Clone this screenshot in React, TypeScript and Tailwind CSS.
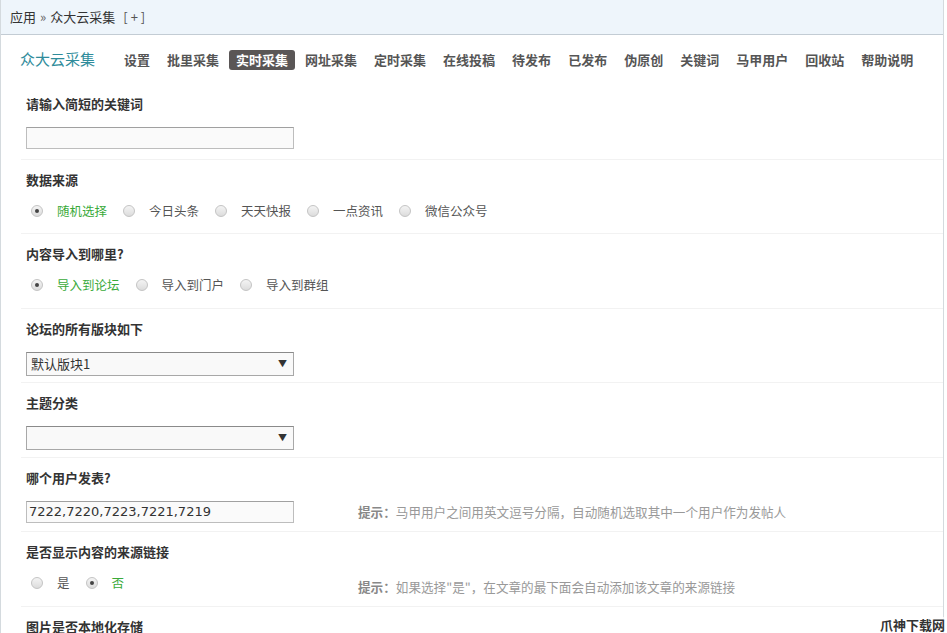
import React from "react";

const FONT = '"Noto Sans CJK SC", "DejaVu Sans", sans-serif';

const navItems = [
  "设置",
  "批里采集",
  "实时采集",
  "网址采集",
  "定时采集",
  "在线投稿",
  "待发布",
  "已发布",
  "伪原创",
  "关键词",
  "马甲用户",
  "回收站",
  "帮助说明",
];

function Radio({ checked }: { checked?: boolean }) {
  return (
    <span className="w-[12px] h-[12px] rounded-full border border-[#c4c4c4] bg-gradient-to-b from-[#f4f4f4] to-[#dcdcdc] flex items-center justify-center shrink-0">
      {checked && <span className="w-[4px] h-[4px] rounded-full bg-[#444]" />}
    </span>
  );
}

function RadioRow({ options, selected }: { options: string[]; selected: number }) {
  return (
    <div className="flex items-center h-[16px] pl-[5px]">
      {options.map((o, i) => (
        <div key={o} className="flex items-center mr-[16px]">
          <Radio checked={i === selected} />
          <span
            className={
              "ml-[14px] text-[12.5px] leading-[16px] " +
              (i === selected ? "text-[#3aaa3a]" : "text-[#555]")
            }
          >
            {o}
          </span>
        </div>
      ))}
    </div>
  );
}

function Section({
  label,
  children,
  first,
}: {
  label: string;
  children: React.ReactNode;
  first?: boolean;
}) {
  return (
    <div
      className={
        "h-[74.5px] pl-[5px] pt-[12px] " + (first ? "" : "border-t border-[#f2f2f2]")
      }
    >
      <div className="text-[13px] leading-[16px] font-bold text-[#333]">{label}</div>
      <div className="mt-[15px]">{children}</div>
    </div>
  );
}

function Select({ value }: { value?: string }) {
  return (
    <div className="w-[268px] h-[24px] border border-[#a8a8a8] border-t-[#8a8a8a] bg-[#f9f9f9] flex items-center justify-between pl-[4px] pr-[6px]">
      <span className="text-[13px] text-[#333]">{value}</span>
      <span className="text-[9px] text-[#333]">▼</span>
    </div>
  );
}

function Hint({ children }: { children: React.ReactNode }) {
  return (
    <span className="ml-[64px] text-[12.6px] leading-[16px] text-[#999]">
      <span className="font-bold text-[#888]">提示：</span>
      {children}
    </span>
  );
}

export default function App() {
  return (
    <div className="w-[947px] h-[633px] overflow-hidden bg-white relative" style={{ fontFamily: FONT }}>
      <div className="w-[944px] h-full border-x border-[#d4dade]">
        <div className="h-[35px] bg-[#eef5fb] border-b border-[#c3ccd4] flex items-center pl-[9px] text-[13px] text-[#333]">
          <span>应用</span>
          <span className="mx-[4px] text-[#666]">»</span>
          <span>众大云采集</span>
          <span className="ml-[8px] text-[#555] tracking-[3px]">[+]</span>
        </div>

        <div className="h-[49px] flex items-center pl-[19px]">
          <span className="text-[15px] text-[#2f8c9b] mr-[22px]">众大云采集</span>
          <div className="flex items-center gap-[3px]">
            {navItems.map((n) => (
              <span
                key={n}
                className={
                  "px-[7px] h-[20px] flex items-center text-[13px] font-bold rounded-[3px] " +
                  (n === "实时采集" ? "bg-[#5a5656] text-white" : "text-[#555]")
                }
              >
                {n}
              </span>
            ))}
          </div>
        </div>

        <div className="ml-[20px]">
          <Section label="请输入简短的关键词" first>
            <div className="w-[268px] h-[22px] border border-[#bdbdbd] border-t-[#a0a0a0] bg-[#fafafa]" />
          </Section>

          <Section label="数据来源">
            <RadioRow options={["随机选择", "今日头条", "天天快报", "一点资讯", "微信公众号"]} selected={0} />
          </Section>

          <Section label="内容导入到哪里?">
            <RadioRow options={["导入到论坛", "导入到门户", "导入到群组"]} selected={0} />
          </Section>

          <Section label="论坛的所有版块如下">
            <Select value="默认版块1" />
          </Section>

          <Section label="主题分类">
            <Select />
          </Section>

          <Section label="哪个用户发表?">
            <div className="flex items-center">
              <div
                className="w-[268px] h-[22px] border border-[#bdbdbd] border-t-[#a0a0a0] bg-[#fafafa] flex items-center pl-[2px] text-[13px] text-[#333] shrink-0"
                style={{ fontFamily: '"DejaVu Sans", sans-serif' }}
              >
                7222,7220,7223,7221,7219
              </div>
              <Hint>马甲用户之间用英文逗号分隔，自动随机选取其中一个用户作为发帖人</Hint>
            </div>
          </Section>

          <Section label="是否显示内容的来源链接">
            <div className="flex items-start">
              <div className="w-[268px] shrink-0">
                <RadioRow options={["是", "否"]} selected={1} />
              </div>
              <div className="mt-[4px] text-[12.6px] leading-[16px]">
                <Hint>如果选择"是"，在文章的最下面会自动添加该文章的来源链接</Hint>
              </div>
            </div>
          </Section>

          <Section label="图片是否本地化存储">
            <div />
          </Section>
        </div>
      </div>

      <div className="absolute right-[2px] bottom-[0px] text-[13px] leading-[16px] font-bold text-[#333] bg-white/70">
        爪神下载网
      </div>
    </div>
  );
}
